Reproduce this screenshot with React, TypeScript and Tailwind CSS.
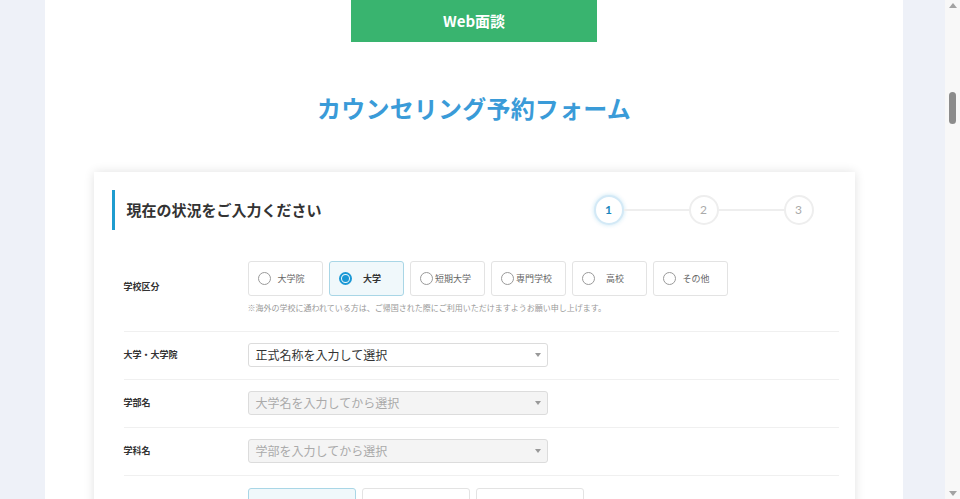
import React from 'react';

const FONT = { fontFamily: '"Noto Sans CJK JP", "Noto Sans", sans-serif' };

const SCHOOL_TYPES = ['大学院', '大学', '短期大学', '専門学校', '高校', 'その他'];

function Radio({ label, checked }: { label: string; checked?: boolean }) {
  return (
    <div
      className={
        'w-[75px] h-[35px] rounded-[3px] border flex items-center pl-[9px] ' +
        (checked ? 'bg-[#f0f8fb] border-[#a9d6e6]' : 'bg-white border-[#e3e3e3]')
      }
    >
      {checked ? (
        <span className="w-[13px] h-[13px] rounded-full border-2 border-[#1a98d5] flex items-center justify-center shrink-0">
          <span className="w-[7px] h-[7px] rounded-full bg-[#1a98d5]" />
        </span>
      ) : (
        <span className="w-[13px] h-[13px] rounded-full border border-[#9a9a9a] bg-white shrink-0" />
      )}
      <span
        className={
          'flex-1 text-center pr-[10px] text-[9px] leading-none ' +
          (checked ? 'font-bold text-[#333]' : 'text-[#666]')
        }
      >
        {label}
      </span>
    </div>
  );
}

function SelectBox({ text, disabled }: { text: string; disabled?: boolean }) {
  return (
    <div
      className={
        'w-[300px] h-[24px] rounded-[3px] border border-[#dcdcdc] flex items-center justify-between pl-[7px] pr-[6px] ' +
        (disabled ? 'bg-[#f4f4f4] text-[#aaa]' : 'bg-white text-[#333]')
      }
    >
      <span className="text-[12px] leading-none">{text}</span>
      <svg width="6" height="4" viewBox="0 0 6 4">
        <path d="M0 0 L6 0 L3 4 Z" fill="#999" />
      </svg>
    </div>
  );
}

function Row({ label, children }: { label: string; children: React.ReactNode }) {
  return (
    <div className="flex items-center pt-[11px] pb-[12px] border-b border-[#f0f0f0]">
      <div className="w-[124px] text-[9px] font-bold text-[#333]">{label}</div>
      <div>{children}</div>
    </div>
  );
}

function Step({ n, active }: { n: number; active?: boolean }) {
  return (
    <div
      className={
        'w-[30px] h-[30px] rounded-full bg-white flex items-center justify-center text-[12px] shrink-0 ' +
        (active
          ? 'border-2 border-[#d3e9f6] text-[#1a86bd] font-bold shadow-[0_0_4px_rgba(26,152,213,0.25)]'
          : 'border-2 border-[#eeeeee] text-[#aaa]')
      }
      style={{ fontFamily: 'Lato, sans-serif' }}
    >
      {n}
    </div>
  );
}

export default function App() {
  return (
    <div className="h-[499px] w-[960px] flex overflow-hidden bg-[#eef1f8]" style={FONT}>
      <div className="flex-1 flex justify-center items-start pl-[3px]">
        <div className="w-[858px] min-h-full bg-white flex flex-col items-center">
          {/* meeting type tab */}
          <div className="shrink-0 w-[246px] h-[42px] bg-[#39b46f] text-white font-bold text-[15px] flex items-center justify-center">
            Web面談
          </div>

          <h1 className="shrink-0 mt-[54px] text-[24px] font-bold text-[#3a9bd8] leading-none tracking-[0.2px]">
            カウンセリング予約フォーム
          </h1>

          <div className="shrink-0 mt-[52px] w-[761px] bg-white shadow-[0_0_10px_rgba(0,0,0,0.12)] pt-[18px] pl-[18px] pr-[17px]">
            <div className="flex items-center justify-between">
              <div className="border-l-[3px] border-[#1f9ccf] h-[40px] flex items-center pl-[12px]">
                <h2 className="text-[15px] font-bold text-[#333]">現在の状況をご入力ください</h2>
              </div>
              <div className="flex items-center mr-[24px]">
                <Step n={1} active />
                <div className="w-[65px] h-[2px] bg-[#eeeeee]" />
                <Step n={2} />
                <div className="w-[65px] h-[2px] bg-[#eeeeee]" />
                <Step n={3} />
              </div>
            </div>

            <div className="ml-[12px] mr-[-1px] mt-[19px]">
              <div className="flex items-center pt-[12px] pb-[19px] border-b border-[#f0f0f0]">
                <div className="w-[124px] text-[9px] font-bold text-[#333]">学校区分</div>
                <div>
                  <div className="flex gap-[6px]">
                    {SCHOOL_TYPES.map((t) => (
                      <Radio key={t} label={t} checked={t === '大学'} />
                    ))}
                  </div>
                  <p className="mt-[8px] text-[8px] text-[#999] leading-none">
                    ※海外の学校に通われている方は、ご帰国された際にご利用いただけますようお願い申し上げます。
                  </p>
                </div>
              </div>

              <Row label="大学・大学院">
                <SelectBox text="正式名称を入力して選択" />
              </Row>
              <Row label="学部名">
                <SelectBox text="大学名を入力してから選択" disabled />
              </Row>
              <Row label="学科名">
                <SelectBox text="学部を入力してから選択" disabled />
              </Row>
              <div className="flex pt-[12px]">
                <div className="w-[124px]" />
                <div className="flex gap-[6px]">
                  <div className="w-[108px] h-[35px] rounded-[3px] border border-[#a9d6e6] bg-[#f0f8fb]" />
                  <div className="w-[108px] h-[35px] rounded-[3px] border border-[#e3e3e3]" />
                  <div className="w-[108px] h-[35px] rounded-[3px] border border-[#e3e3e3]" />
                </div>
              </div>
            </div>
          </div>
        </div>
      </div>

      {/* scrollbar */}
      <div className="w-[15px] bg-[#f8f8f8] flex flex-col items-center justify-between py-[3px]">
        <div className="w-0 h-0 border-l-[4px] border-r-[4px] border-b-[5px] border-l-transparent border-r-transparent border-b-[#a3a3a3]" />
        <div className="flex-1 w-full flex flex-col items-center pt-[84px]">
          <div className="w-[7px] h-[32px] rounded-full bg-[#8c8c8c]" />
        </div>
        <div className="w-0 h-0 border-l-[4px] border-r-[4px] border-t-[5px] border-l-transparent border-r-transparent border-t-[#a3a3a3]" />
      </div>
    </div>
  );
}
